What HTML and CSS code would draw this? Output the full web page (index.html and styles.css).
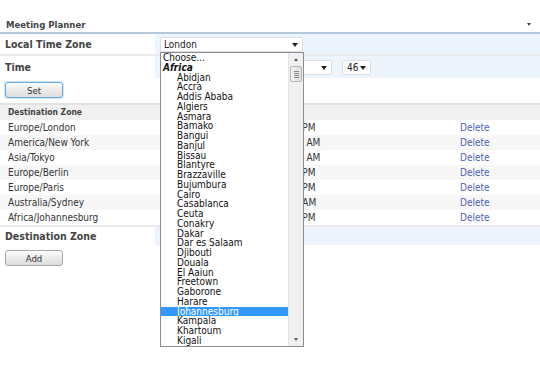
FILE: index.html
```html
<!DOCTYPE html>
<html>
<head>
<meta charset="utf-8">
<link rel="stylesheet" href="styles.css">
</head>
<body>
<div class="page">
  <div class="title">
    <span>Meeting Planner</span>
    <span class="tiny-arrow"></span>
  </div>
  <div class="frow local">
    <div class="flabel">Local Time Zone</div>
    <div class="ffield">
      <div class="select tz">London<span class="arr"></span></div>
    </div>
  </div>
  <div class="frow timerow">
    <div class="flabel">Time</div>
    <div class="ffield">
      <div class="select ampm">PM<span class="arr"></span></div>
      <div class="select mins">46<span class="arr"></span></div>
    </div>
  </div>
  <div class="btnrow"><button class="btn focus">Set</button></div>
  <div class="table">
    <div class="thead">Destination Zone</div>
    <div class="trow"><span class="zone">Europe/London</span><span class="time">Fri 12:46 PM</span><span class="del">Delete</span></div>
    <div class="trow alt"><span class="zone">America/New York</span><span class="time">Sat 07:46 AM</span><span class="del">Delete</span></div>
    <div class="trow"><span class="zone">Asia/Tokyo</span><span class="time">Sat 08:46 AM</span><span class="del">Delete</span></div>
    <div class="trow alt"><span class="zone">Europe/Berlin</span><span class="time">Fri 01:46 PM</span><span class="del">Delete</span></div>
    <div class="trow"><span class="zone">Europe/Paris</span><span class="time">Fri 01:46 PM</span><span class="del">Delete</span></div>
    <div class="trow alt"><span class="zone">Australia/Sydney</span><span class="time">Fri 09:46 AM</span><span class="del">Delete</span></div>
    <div class="trow"><span class="zone">Africa/Johannesburg</span><span class="time">Fri 01:46 PM</span><span class="del">Delete</span></div>
  </div>
  <div class="frow addrow">
    <div class="flabel">Destination Zone</div>
    <div class="ffield"></div>
  </div>
  <div class="btnrow addbtn"><button class="btn">Add</button></div>

  <div class="dropdown">
    <ul class="opts">
      <li>Choose...</li>
      <li class="grp">Africa</li>
      <li class="ind">Abidjan</li>
      <li class="ind">Accra</li>
      <li class="ind">Addis Ababa</li>
      <li class="ind">Algiers</li>
      <li class="ind">Asmara</li>
      <li class="ind">Bamako</li>
      <li class="ind">Bangui</li>
      <li class="ind">Banjul</li>
      <li class="ind">Bissau</li>
      <li class="ind">Blantyre</li>
      <li class="ind">Brazzaville</li>
      <li class="ind">Bujumbura</li>
      <li class="ind">Cairo</li>
      <li class="ind">Casablanca</li>
      <li class="ind">Ceuta</li>
      <li class="ind">Conakry</li>
      <li class="ind">Dakar</li>
      <li class="ind">Dar es Salaam</li>
      <li class="ind">Djibouti</li>
      <li class="ind">Douala</li>
      <li class="ind">El Aaiun</li>
      <li class="ind">Freetown</li>
      <li class="ind">Gaborone</li>
      <li class="ind">Harare</li>
      <li class="ind sel">Johannesburg</li>
      <li class="ind">Kampala</li>
      <li class="ind">Khartoum</li>
      <li class="ind">Kigali</li>
    </ul>
    <div class="sbar">
      <span class="sb-up"></span>
      <span class="sb-thumb"><i></i><i></i><i></i><i></i></span>
      <span class="sb-space"></span>
      <span class="sb-down"></span>
    </div>
  </div>
</div>
</body>
</html>
```
FILE: styles.css
```css
* { box-sizing: border-box; }
html, body { margin: 0; padding: 0; background: #fff; }
body {
  font-family: "DejaVu Sans Condensed", "DejaVu Sans", sans-serif;
  font-size: 10px;
  color: #333;
}
.page { position: relative; width: 540px; height: 365px; padding-top: 17px; }
.title {
  display: flex; justify-content: space-between; align-items: center;
  height: 17px; padding: 0 8px 1px 6px;
  font-weight: bold; font-size: 9.5px; color: #444;
  border-bottom: 2px solid #b4c7dd;
}
.tiny-arrow {
  width: 0; height: 0; margin-right: 1px;
  border-left: 2.5px solid transparent; border-right: 2.5px solid transparent;
  border-top: 3px solid #444;
}
.frow {
  display: grid; grid-template-columns: 155px 1fr;
}
.frow.local { height: 22px; border-bottom: 2px solid #eaeaea; }
.frow.timerow { height: 22px; }
.flabel {
  display: flex; align-items: center; padding-left: 5px;
  font-weight: bold; font-size: 10.5px; color: #444;
}
.ffield { background: #eef4fc; display: flex; align-items: center; padding-left: 5px; gap: 10px; }
.select {
  position: relative; height: 15px; background: #fff;
  border: 1px solid #d6dfe9; border-radius: 2px;
  font-size: 10px; line-height: 13px; padding-left: 3px; color: #222;
}
.select .arr {
  position: absolute; right: 4px; top: 5px;
  border-left: 3px solid transparent; border-right: 3px solid transparent;
  border-top: 4px solid #222;
}
.tz { width: 143px; }
.ampm { width: 81px; margin-left: 91px; }
.mins { width: 29px; padding-left: 4px; }
.btnrow { height: 25px; padding: 4px 0 0 5px; }
.btnrow.addbtn { padding-top: 5px; }
.btn {
  width: 58px; height: 16px; padding: 0;
  font-family: inherit; font-size: 9.5px; color: #333;
  border: 1px solid #a6a6a6; border-radius: 3px;
  background: linear-gradient(#fdfdfd, #e9e9e9 55%, #dedede);
}
.btn.focus { border-color: #6aa9d8; box-shadow: 0 0 0 1px #cfe4f5; }
.table { border-top: 2px solid #e2e2e2; }
.thead {
  height: 15px; line-height: 15px; padding-left: 8px;
  background: #f0f0f0; font-weight: bold; font-size: 8.5px; color: #444;
}
.trow {
  display: grid; grid-template-columns: 246px 206px 1fr;
  height: 15px; line-height: 15px; background: #fff;
  padding-left: 8px; color: #333;
}
.trow.alt { background: #f7f7f7; }
.time { padding-left: 6px; }
.del { color: #4e5fb8; }
.addrow { border-top: 2px solid #eaeaea; height: 20px; }
.addrow .flabel { font-size: 10.5px; }
.dropdown {
  position: absolute; left: 160px; top: 52px;
  width: 144px; height: 295px;
  border: 1px solid #8d8d8d; background: #fff;
  display: flex;
}
.opts {
  list-style: none; margin: 0; padding: 0; flex: 1;
  font-size: 10px; color: #111;
}
.opts li { height: 9.75px; line-height: 10px; padding-left: 2px; white-space: nowrap; }
.opts li.grp { font-weight: bold; font-style: italic; }
.opts li.ind { padding-left: 16px; }
.opts li.sel { background: #3399ff; color: #fff; }
.sbar {
  width: 15px; background: #f0f0f0; border-left: 1px solid #e4e4e4;
  display: flex; flex-direction: column;
}
.sb-up, .sb-down { height: 13px; position: relative; }
.sb-up::after, .sb-down::after {
  content: ""; position: absolute; left: 5px;
  border-left: 2.5px solid transparent; border-right: 2.5px solid transparent;
}
.sb-up::after { top: 5px; border-bottom: 3px solid #555; }
.sb-down::after { top: 5px; border-top: 3px solid #555; }
.sb-thumb {
  height: 16px; margin: 0 1px; border: 1px solid #b5b5b5; border-radius: 2px;
  background: linear-gradient(90deg, #f4f4f4, #dedede);
  display: flex; flex-direction: column; align-items: center; justify-content: center; gap: 1px;
}
.sb-thumb i { display: block; width: 5px; height: 1px; background: #888; }
.sb-space { flex: 1; }
```
